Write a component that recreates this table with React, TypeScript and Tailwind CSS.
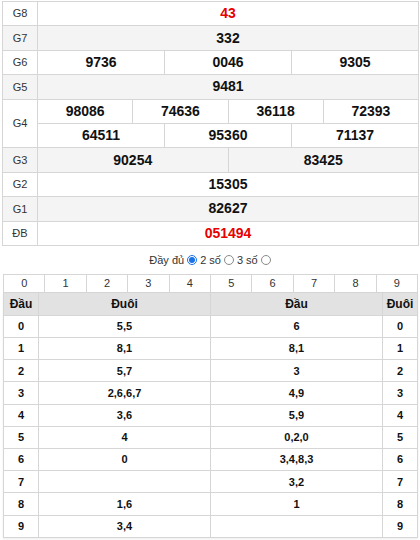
const prizes: { label: string; rows: string[][]; red?: boolean; gray?: boolean }[] = [
  { label: "G8", rows: [["43"]], red: true },
  { label: "G7", rows: [["332"]], gray: true },
  { label: "G6", rows: [["9736", "0046", "9305"]] },
  { label: "G5", rows: [["9481"]], gray: true },
  { label: "G4", rows: [["98086", "74636", "36118", "72393"], ["64511", "95360", "71137"]] },
  { label: "G3", rows: [["90254", "83425"]], gray: true },
  { label: "G2", rows: [["15305"]] },
  { label: "G1", rows: [["82627"]], gray: true },
  { label: "ĐB", rows: [["051494"]], red: true },
];

const loto: [string, string, string][] = [
  ["5,5", "6", "0"],
  ["8,1", "8,1", "1"],
  ["5,7", "3", "2"],
  ["2,6,6,7", "4,9", "3"],
  ["3,6", "5,9", "4"],
  ["4", "0,2,0", "5"],
  ["0", "3,4,8,3", "6"],
  ["", "3,2", "7"],
  ["1,6", "1", "8"],
  ["3,4", "", "9"],
];

function Radio({ checked }: { checked?: boolean }) {
  return checked ? (
    <span className="inline-flex h-[10px] w-[10px] items-center justify-center rounded-full border border-[#1a73e8] bg-white">
      <span className="h-[6px] w-[6px] rounded-full bg-[#1a73e8]" />
    </span>
  ) : (
    <span className="inline-block h-[10px] w-[10px] rounded-full border border-[#8a8a8a] bg-white" />
  );
}

export default function App() {
  return (
    <div className="h-[540px] w-[420px] bg-white text-[#222] font-['Liberation_Sans',Arial,sans-serif]">
      {/* prize table */}
      <div className="ml-[2px] mt-[1px] w-[417px] border border-[#d6d6d6]">
        {prizes.map((p, i) => (
          <div
            key={p.label}
            className={`flex ${i < prizes.length - 1 ? "border-b border-[#d6d6d6]" : ""} ${p.gray ? "bg-[#f4f4f4]" : "bg-white"}`}
          >
            <div className="flex w-[35px] shrink-0 items-center justify-center border-r border-[#d6d6d6] text-[11px] text-[#333]">
              {p.label}
            </div>
            <div className="flex flex-1 flex-col">
              {p.rows.map((r, ri) => (
                <div
                  key={ri}
                  className={`flex ${ri < p.rows.length - 1 ? "h-[24.4px] border-b border-[#d6d6d6]" : "h-[23.4px]"}`}
                >
                  {r.map((n, ni) => (
                    <div
                      key={ni}
                      className={`flex flex-1 items-center justify-center text-[14px] font-bold ${ni > 0 ? "border-l border-[#d6d6d6]" : ""} ${p.red ? "text-[#e60000]" : "text-[#111]"}`}
                    >
                      {n}
                    </div>
                  ))}
                </div>
              ))}
            </div>
          </div>
        ))}
      </div>

      {/* options */}
      <div className="flex h-[28px] items-center justify-center gap-[3px] text-[11px] text-[#333]">
        <span>Đầy đủ</span>
        <Radio checked />
        <span>2 số</span>
        <Radio />
        <span>3 số</span>
        <Radio />
      </div>

      {/* digits */}
      <div className="ml-[3px] flex h-[19px] w-[415px] border border-[#d6d6d6] text-[11px] text-[#333]">
        {Array.from({ length: 10 }, (_, d) => (
          <div
            key={d}
            className={`flex flex-1 items-center justify-center ${d > 0 ? "border-l border-[#d6d6d6]" : ""}`}
          >
            {d}
          </div>
        ))}
      </div>

      {/* loto table */}
      <div className="ml-[3px] w-[415px] border-x border-b border-[#d6d6d6] text-[11px] font-bold text-[#111] shadow-[0_1px_2px_rgba(0,0,0,0.08)]">
        <div className="flex h-[22px] bg-[#e2e2e2] text-[12px]">
          <div className="flex w-[35px] items-center justify-center border-r border-[#d6d6d6]">Đầu</div>
          <div className="flex w-[172px] items-center justify-center border-r border-[#d6d6d6]">Đuôi</div>
          <div className="flex w-[172px] items-center justify-center border-r border-[#d6d6d6]">Đầu</div>
          <div className="flex flex-1 items-center justify-center">Đuôi</div>
        </div>
        {loto.map(([tail, head, d2], i) => (
          <div key={i} className="flex h-[22.2px] border-t border-[#d6d6d6]">
            <div className="flex w-[35px] items-center justify-center border-r border-[#d6d6d6]">{i}</div>
            <div className="flex w-[172px] items-center justify-center border-r border-[#d6d6d6]">{tail}</div>
            <div className="flex w-[172px] items-center justify-center border-r border-[#d6d6d6]">{head}</div>
            <div className="flex flex-1 items-center justify-center">{d2}</div>
          </div>
        ))}
      </div>
    </div>
  );
}
